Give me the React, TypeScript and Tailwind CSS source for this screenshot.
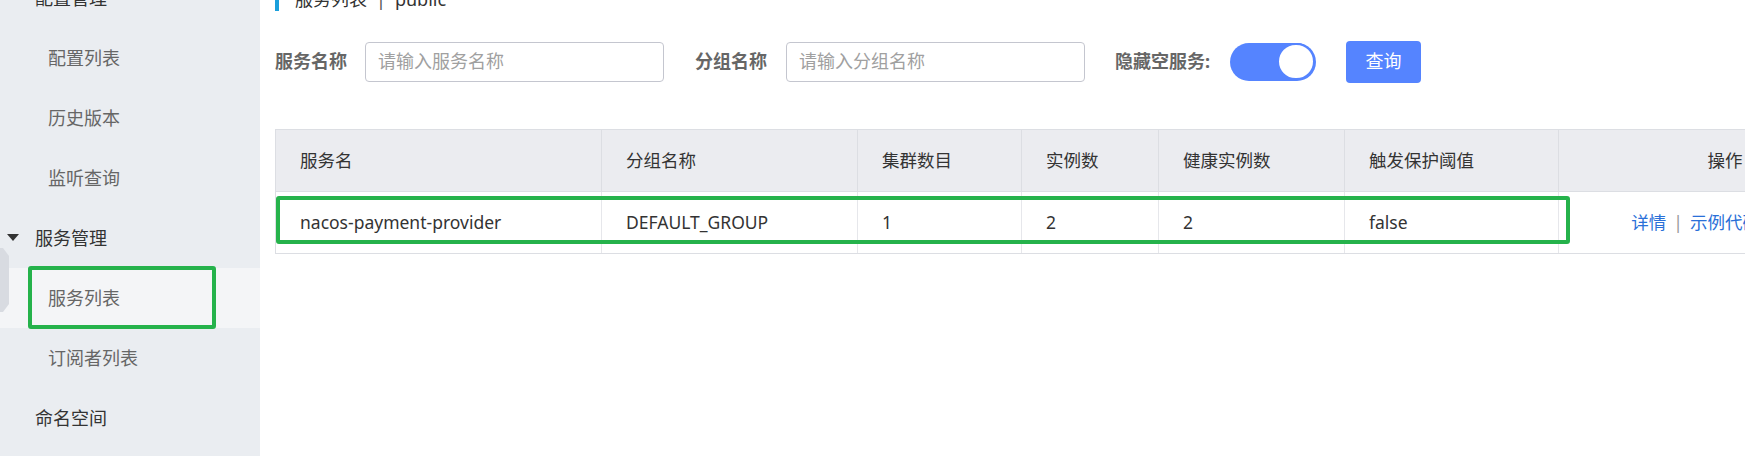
import React from "react";

const cols = [
  { label: "服务名", w: "w-[326px]" },
  { label: "分组名称", w: "w-[256px]" },
  { label: "集群数目", w: "w-[164px]" },
  { label: "实例数", w: "w-[137px]" },
  { label: "健康实例数", w: "w-[186px]" },
  { label: "触发保护阈值", w: "w-[214px]" },
];

const row = ["nacos-payment-provider", "DEFAULT_GROUP", "1", "2", "2", "false"];

function NavItem({
  children,
  sub,
  active,
  arrow,
}: {
  children: React.ReactNode;
  sub?: boolean;
  active?: boolean;
  arrow?: boolean;
}) {
  return (
    <div
      className={
        "relative flex h-[60px] items-center text-[18px] " +
        (sub ? "pl-[48px] text-[#666666] " : "pl-[35px] text-[#333333] ") +
        (active ? "bg-[#f4f5f7]" : "")
      }
    >
      {arrow && (
        <svg className="absolute left-[7px] top-[26px]" width="12" height="7" viewBox="0 0 12 7">
          <path d="M0 0 L12 0 L6 7 Z" fill="#333333" />
        </svg>
      )}
      {children}
    </div>
  );
}

export default function App() {
  return (
    <div className="relative flex h-[456px] w-[1745px] overflow-hidden bg-white font-['Noto_Sans','Noto_Sans_CJK_SC',sans-serif]">
      {/* Sidebar */}
      <aside className="relative w-[260px] shrink-0 bg-[#eaedf1]">
        <div className="mt-[-32px]">
          <NavItem>配置管理</NavItem>
          <NavItem sub>配置列表</NavItem>
          <NavItem sub>历史版本</NavItem>
          <NavItem sub>监听查询</NavItem>
          <NavItem arrow>服务管理</NavItem>
          <NavItem sub active>
            服务列表
          </NavItem>
          <NavItem sub>订阅者列表</NavItem>
          <NavItem>命名空间</NavItem>
        </div>
        <svg className="absolute left-0 top-[248px]" width="9" height="64" viewBox="0 0 9 64">
          <path d="M0 0 L3 0 L9 8 L9 56 L3 64 L0 64 Z" fill="#d8dbe1" />
        </svg>
      </aside>

      {/* Main */}
      <main className="min-w-0 flex-1 pl-[15px]">
        <div className="mt-[-17px] flex h-[28px] items-end border-l-4 border-[#1a9fdb] pl-[16px] text-[18px] leading-[24px] text-[#333333]">
          <span>服务列表</span>
          <span className="mx-[9px] text-[#555555]">|</span>
          <span>public</span>
        </div>

        <div className="mt-[30px] flex h-[41px] items-center">
          <span className="text-[18px] font-bold text-[#666666]">服务名称</span>
          <div className="ml-[18px] flex h-[40px] w-[299px] items-center rounded-[4px] border border-[#c4c6cf] pl-[12px] text-[18px] text-[#a0a0a0]">
            请输入服务名称
          </div>
          <span className="ml-[31px] text-[18px] font-bold text-[#666666]">分组名称</span>
          <div className="ml-[19px] flex h-[40px] w-[299px] items-center rounded-[4px] border border-[#c4c6cf] pl-[12px] text-[18px] text-[#a0a0a0]">
            请输入分组名称
          </div>
          <span className="ml-[30px] text-[18px] font-bold text-[#666666]">隐藏空服务:</span>
          <div className="ml-[20px] flex h-[38px] w-[86px] items-center justify-end rounded-full bg-[#5584ff] pr-[1px]">
            <div className="h-[37px] w-[38px] rounded-full border-2 border-[#5584ff] bg-white" />
          </div>
          <button className="ml-[30px] flex h-[42px] w-[75px] items-center justify-center rounded-[4px] bg-[#5584ff] text-[18px] text-white">
            查询
          </button>
        </div>

        {/* Table */}
        <div className="mt-[47px] w-[1615px] border border-[#dcdee3] text-[17.5px] text-[#333333]">
          <div className="flex h-[61px] bg-[#ebecf0]">
            {cols.map((c) => (
              <div key={c.label} className={`${c.w} flex shrink-0 items-center border-r border-[#dcdee3] pl-[24px]`}>
                {c.label}
              </div>
            ))}
            <div className="flex w-[332px] shrink-0 items-center justify-center">操作</div>
          </div>
          <div className="flex h-[62px] border-t border-[#dcdee3] bg-white">
            {row.map((v, i) => (
              <div key={i} className={`${cols[i].w} flex shrink-0 items-center border-r border-[#e6e7eb] pl-[24px]`}>
                {v}
              </div>
            ))}
            <div className="flex w-[332px] shrink-0 items-center justify-center gap-[7px] text-[#2a70d8]">
              <span>详情</span>
              <span className="text-[#999999]">|</span>
              <span>示例代码</span>
              <span className="text-[#999999]">|</span>
              <span>删除</span>
            </div>
          </div>
        </div>
      </main>

      {/* Annotation boxes */}
      <div className="pointer-events-none absolute left-[28px] top-[266px] h-[63px] w-[188px] rounded-[3px] border-4 border-[#25b24b]" />
      <div className="pointer-events-none absolute left-[276px] top-[196px] h-[48px] w-[1294px] rounded-[3px] border-4 border-[#25b24b]" />
    </div>
  );
}
